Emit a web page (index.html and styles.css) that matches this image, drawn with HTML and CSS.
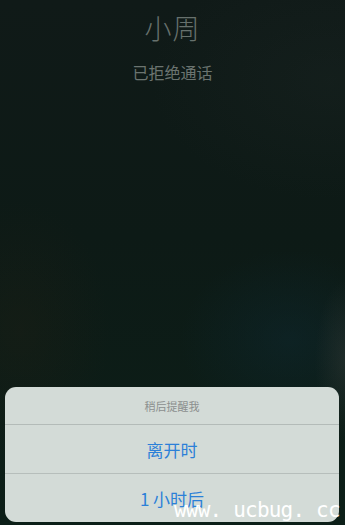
FILE: index.html
```html
<!DOCTYPE html>
<html lang="zh">
<head>
<meta charset="utf-8">
<link rel="stylesheet" href="styles.css">
</head>
<body>
<div class="screen">
  <div class="caller">
    <div class="name">小周</div>
    <div class="status">已拒绝通话</div>
  </div>
  <div class="sheet">
    <div class="sheet-title">稍后提醒我</div>
    <div class="sheet-btn">离开时</div>
    <div class="sheet-btn">1 小时后</div>
  </div>
  <div class="watermark">www. ucbug. cc</div>
</div>
</body>
</html>
```
FILE: styles.css
```css
html, body {
  margin: 0;
  padding: 0;
}
body {
  width: 345px;
  height: 525px;
  overflow: hidden;
  font-family: "Noto Sans CJK SC", "Liberation Sans", sans-serif;
}
.screen {
  position: relative;
  width: 345px;
  height: 525px;
  display: flex;
  flex-direction: column;
  background:
    radial-gradient(ellipse 30px 80px at 345px 360px, rgba(70, 72, 68, 0.3), transparent),
    radial-gradient(ellipse 110px 90px at 290px 340px, rgba(14, 40, 48, 0.5), transparent),
    radial-gradient(ellipse 90px 130px at 20px 330px, rgba(30, 30, 20, 0.4), transparent),
    radial-gradient(ellipse 180px 120px at 330px 80px, rgba(30, 40, 38, 0.3), transparent),
    linear-gradient(180deg, #101a18 0%, #0d1a16 45%, #0c1f18 100%);
}
.caller {
  display: flex;
  flex-direction: column;
  align-items: center;
  padding-top: 10px;
  height: 377px;
  box-sizing: border-box;
}
.name {
  font-size: 27px;
  font-weight: 300;
  color: #67716d;
  line-height: 36px;
  letter-spacing: 1px;
}
.status {
  margin-top: 15px;
  font-size: 16px;
  color: #6b7470;
  line-height: 22px;
}
.sheet {
  margin: 10px 6px 0 5px;
  background: #d3dbd7;
  border-radius: 11px;
  overflow: hidden;
  height: 135px;
}
.sheet-title {
  height: 38px;
  display: flex;
  align-items: center;
  justify-content: center;
  font-size: 11px;
  color: #8b8f8e;
  border-bottom: 1px solid #b3bbb8;
  padding-top: 1px;
  box-sizing: border-box;
}
.sheet-btn {
  height: 48px;
  display: flex;
  align-items: center;
  justify-content: center;
  font-size: 17px;
  color: #2b80d8;
  border-bottom: 1px solid #b6bebb;
}
.sheet-btn:last-child {
  border-bottom: none;
}
.watermark {
  position: absolute;
  left: 174px;
  top: 498px;
  font-family: "DejaVu Sans Mono", "Liberation Mono", monospace;
  font-size: 21px;
  letter-spacing: -0.8px;
  line-height: 24px;
  color: #ffffff;
  white-space: nowrap;
}
```
